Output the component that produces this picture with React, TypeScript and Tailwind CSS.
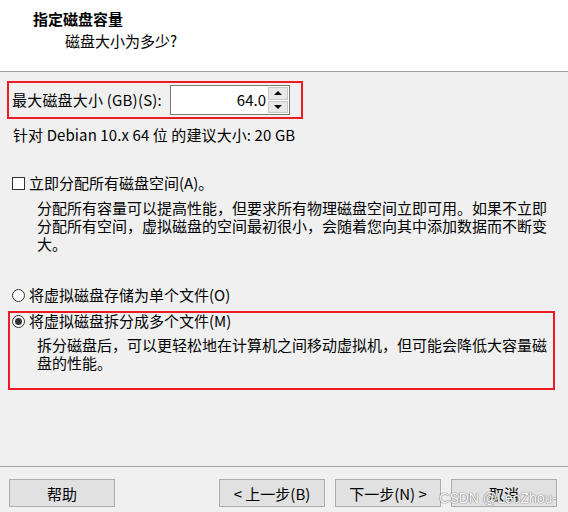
import React from "react";

const font = { fontFamily: '"Noto Sans CJK SC", "Liberation Sans", sans-serif' };

const Radio: React.FC<{ checked?: boolean }> = ({ checked }) => (
  <span className="w-[13px] h-[13px] rounded-full border border-[#333] bg-white flex items-center justify-center shrink-0">
    {checked && <span className="w-[7px] h-[7px] rounded-full bg-[#333]" />}
  </span>
);

const Btn: React.FC<{ children: React.ReactNode }> = ({ children }) => (
  <button className="w-[106px] h-[28px] bg-[#e1e1e1] border border-[#adadad] text-[15px] leading-none text-black">
    {children}
  </button>
);

export default function App() {
  return (
    <div
      className="w-[568px] h-[512px] bg-[#f0f0f0] relative overflow-hidden flex flex-col text-[15px] leading-[18px] text-black"
      style={font}
    >
      {/* header */}
      <div className="h-[72px] bg-white border-b border-[#a0a0a0] shrink-0">
        <div className="pl-[33px] pt-[8px] font-bold leading-[22px]">指定磁盘容量</div>
        <div className="pl-[65px] leading-[22px]">磁盘大小为多少?</div>
      </div>

      {/* size field */}
      <div className="mt-[9px] ml-[7px] w-[296px] h-[38px] border-2 border-[#ed1c24] flex items-center">
        <span className="pl-[3px] tracking-[0.2px]">最大磁盘大小 (GB)(S):</span>
        <div className="ml-auto mr-[11px] w-[120px] h-[30px] bg-white border border-[#7a7a7a] flex items-center">
          <span className="flex-1 text-right pr-[2px]">64.0</span>
          <div className="w-[20px] h-[26px] flex flex-col gap-px mr-px">
            <div className="flex-1 bg-[#e8e8e8] border border-[#c8c8c8] flex items-center justify-center">
              <span className="w-0 h-0 border-x-[4px] border-x-transparent border-b-[4px] border-b-black" />
            </div>
            <div className="flex-1 bg-[#e8e8e8] border border-[#c8c8c8] flex items-center justify-center">
              <span className="w-0 h-0 border-x-[4px] border-x-transparent border-t-[4px] border-t-black" />
            </div>
          </div>
        </div>
      </div>

      <div className="ml-[13px] mt-[7px] tracking-[0.1px]">针对 Debian 10.x 64 位 的建议大小: 20 GB</div>

      {/* allocate all */}
      <div className="mt-[30px] ml-[12px] flex items-center gap-[4px]">
        <span className="w-[13px] h-[13px] border border-[#333] bg-white shrink-0" />
        <span>立即分配所有磁盘空间(A)。</span>
      </div>
      <p className="ml-[37px] mr-[16px] mt-[7px]">
        分配所有容量可以提高性能，但要求所有物理磁盘空间立即可用。如果不立即分配所有空间，虚拟磁盘的空间最初很小，会随着您向其中添加数据而不断变大。
      </p>

      {/* file options */}
      <div className="mt-[33px] ml-[12px] flex items-center gap-[4px]">
        <Radio />
        <span>将虚拟磁盘存储为单个文件(O)</span>
      </div>
      <div className="mt-[7px] ml-[8px] w-[547px] h-[79px] border-2 border-[#ed1c24]">
        <div className="ml-[2px] -mt-[1px] flex items-center gap-[4px]">
          <Radio checked />
          <span>将虚拟磁盘拆分成多个文件(M)</span>
        </div>
        <p className="ml-[27px] mr-[4px] mt-[6px]">
          拆分磁盘后，可以更轻松地在计算机之间移动虚拟机，但可能会降低大容量磁盘的性能。
        </p>
      </div>

      <div className="flex-1" />

      {/* footer */}
      <div className="h-[46px] border-t border-[#a0a0a0] shrink-0 pt-[12px] pl-[9px] pr-[11px] flex items-start justify-between">
        <Btn>帮助</Btn>
        <div className="flex gap-[10px]">
          <Btn>&lt; 上一步(B)</Btn>
          <Btn>下一步(N) &gt;</Btn>
          <Btn>取消</Btn>
        </div>
      </div>

      {/* watermark over the buttons */}
      <span
        className="absolute right-[11px] bottom-[7px] text-[14px] leading-none text-white"
        style={{ fontFamily: '"Liberation Sans", sans-serif', textShadow: "0 0 1px #666, 0 0 1px #666" }}
      >
        CSDN @LeoZhou-
      </span>
    </div>
  );
}
